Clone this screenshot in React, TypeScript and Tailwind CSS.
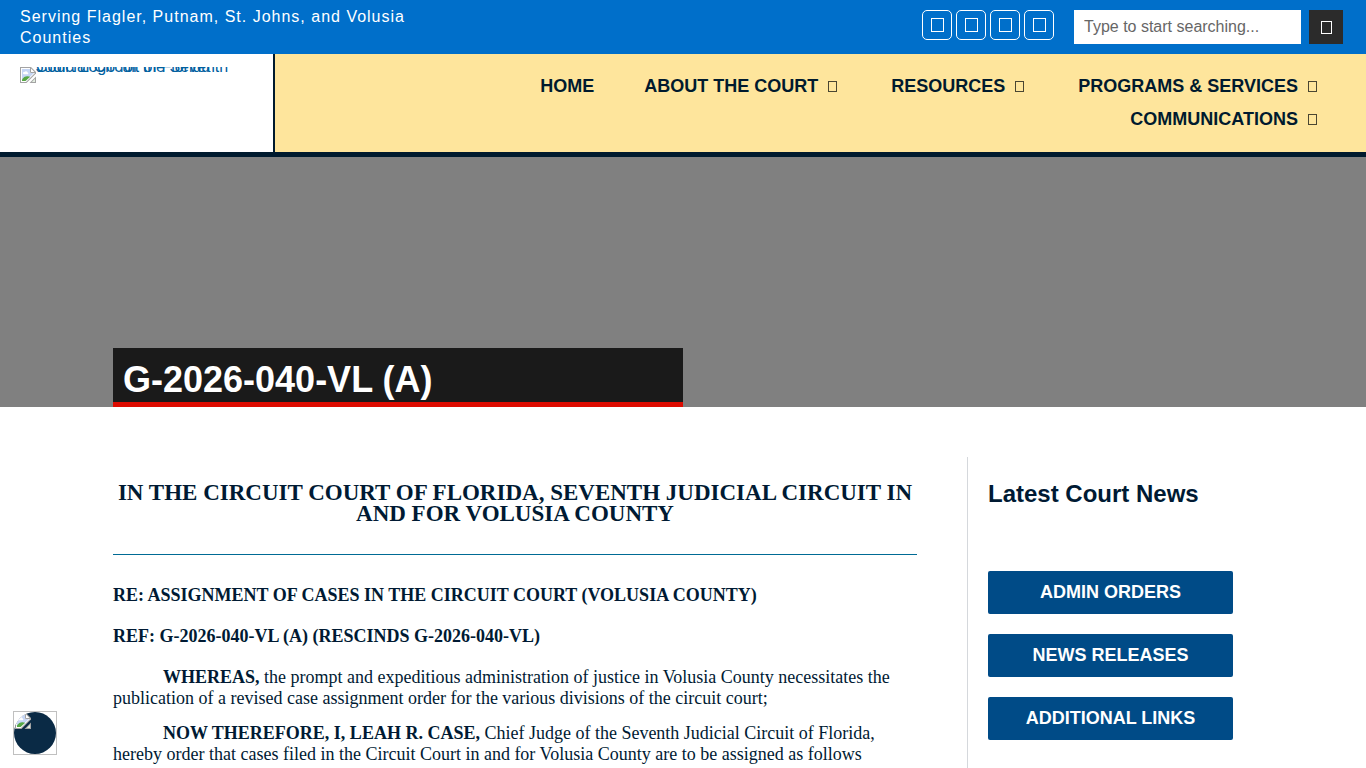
import React, { useState } from "react";
import clsx from "clsx";

const socialLinks = ["Facebook", "Twitter", "YouTube", "Instagram"];

const navItems = [
  { label: "HOME", href: "#home", hasMenu: false },
  { label: "ABOUT THE COURT", href: "#about", hasMenu: true },
  { label: "RESOURCES", href: "#resources", hasMenu: true },
  { label: "PROGRAMS & SERVICES", href: "#programs", hasMenu: true },
  { label: "COMMUNICATIONS", href: "#communications", hasMenu: true },
];

const sidebarLinks = [
  { label: "ADMIN ORDERS", href: "#admin-orders" },
  { label: "NEWS RELEASES", href: "#news-releases" },
  { label: "ADDITIONAL LINKS", href: "#additional-links" },
];

// empty glyph box, sized by the caller
function GlyphBox({ className }: { className: string }) {
  return <span aria-hidden="true" className={clsx("block border", className)} />;
}

// torn page with a little landscape, the tear itself stays see-through
function BrokenImage({ className }: { className?: string }) {
  return (
    <svg
      width="16"
      height="16"
      viewBox="0 0 16 16"
      aria-hidden="true"
      className={clsx("shrink-0", className)}
    >
      <path d="M0 0H11L16 5V6.5L6.5 16H0Z" fill="#a3a3a3" />
      <path d="M1 1H10.6L15 5.4V6L6 15H1Z" fill="#fff" />
      <path d="M2 2H10V6H14L5.5 14H2Z" fill="#c6d6f5" />
      <path d="M3 6.2a1.4 1.4 0 0 1 1.6-1.3 1.7 1.7 0 0 1 3 .6 1 1 0 0 1 .4 1.7H4a1 1 0 0 1-1-1Z" fill="#fff" />
      <path d="M2 14V12.6C3.4 10.4 5.3 9.2 7.4 9.3L10.2 9.7 5.5 14Z" fill="#57a844" />
      <path d="M10.5 0.5V5.5H15.5" fill="none" stroke="#a3a3a3" />
      <path d="M16 9.5V16H9.5Z" fill="#a3a3a3" />
      <path d="M15 11.8V15H11.8Z" fill="#e4efe2" />
    </svg>
  );
}

function TopBar() {
  const [query, setQuery] = useState("");

  return (
    <div className="flex items-start justify-between bg-[#006fca] text-white">
      <p className="w-1/3 px-5 py-1.5 leading-[21px] tracking-[1px]">
        Serving Flagler, Putnam, St. Johns, and Volusia Counties
      </p>
      <div className="flex gap-5 py-2.5 pr-[23px]">
        <div className="flex gap-1">
          {socialLinks.map((name) => (
            <a
              key={name}
              href={"#" + name.toLowerCase()}
              aria-label={name}
              className="flex size-[30px] items-center justify-center rounded-[5px] border border-white"
            >
              <GlyphBox className="h-3.5 w-[13px] border-white" />
            </a>
          ))}
        </div>
        <form className="flex gap-2" onSubmit={(e) => e.preventDefault()}>
          <input
            type="search"
            aria-label="Search"
            placeholder="Type to start searching..."
            value={query}
            onChange={(e) => setQuery(e.target.value)}
            className="h-[34px] w-[227px] bg-white px-2.5 text-black outline-none placeholder:text-[#666]"
          />
          <button
            type="submit"
            aria-label="Submit search"
            className="flex size-[34px] items-center justify-center bg-[#2b2b2b]"
          >
            <GlyphBox className="h-[13px] w-[11px] border-white" />
          </button>
        </form>
      </div>
    </div>
  );
}

function Header() {
  return (
    <header className="flex border-b-[5px] border-[#001a2e]">
      <div className="w-1/5 shrink-0 px-5 py-[13px]">
        <a href="#home" className="flex h-4 overflow-hidden text-[#00609f]">
          <BrokenImage />
          {/* collapsed line height stacks both lines of the logo label */}
          <span className="w-[200px] leading-[0px]">
            Court Logo for the Seventh
            <br />
            Judicial Circuit of Florida
          </span>
        </a>
      </div>
      <nav className="flex flex-1 flex-wrap justify-end border-l-2 border-[#001a2e] bg-[#fee59c] px-5 py-4">
        {navItems.map((item) => (
          <a
            key={item.label}
            href={item.href}
            className="flex h-[33px] items-center px-[25px] text-[18px] font-bold text-[#001a2e]"
          >
            {item.label}
            {item.hasMenu && <GlyphBox className="mr-1 ml-2.5 h-[11px] w-[9px] border-[#4a4632]" />}
          </a>
        ))}
      </nav>
    </header>
  );
}

export default function App() {
  return (
    <div className="flex min-h-screen flex-col bg-white font-['Liberation_Sans',Arial,sans-serif] text-base text-[#001a33]">
      <TopBar />
      <Header />

      <section className="flex h-[250px] items-end bg-[#808080]">
        <div className="mx-auto w-full max-w-[1140px]">
          <h1 className="w-1/2 border-b-[5px] border-[#dd0b00] bg-[#1a1a1a] px-2.5 pt-2.5 text-[36px] leading-[44px] font-bold text-white">
            G-2026-040-VL (A)
          </h1>
        </div>
      </section>

      <div className="mx-auto flex w-full max-w-[1140px] grow pt-[50px]">
        <main className="flex-1 pr-[50px] font-['Liberation_Serif','Times_New_Roman',serif] text-[18px] leading-[21px]">
          <h2 className="border-b border-[#006b95] pt-[25px] pb-[30px] text-center text-[23px] leading-[21px] font-bold">
            IN THE CIRCUIT COURT OF FLORIDA, SEVENTH JUDICIAL CIRCUIT IN AND FOR VOLUSIA COUNTY
          </h2>
          <p className="mt-[30px] mb-5 font-bold">
            RE: ASSIGNMENT OF CASES IN THE CIRCUIT COURT (VOLUSIA COUNTY)
          </p>
          <p className="mb-5 font-bold">REF: G-2026-040-VL (A) (RESCINDS G-2026-040-VL)</p>
          <p className="mb-3.5 indent-[50px]">
            <strong>WHEREAS,</strong> the prompt and expeditious administration of justice in Volusia
            County necessitates the publication of a revised case assignment order for the various
            divisions of the circuit court;
          </p>
          <p className="indent-[50px]">
            <strong>NOW THEREFORE, I, LEAH R. CASE,</strong> Chief Judge of the Seventh Judicial
            Circuit of Florida, hereby order that cases filed in the Circuit Court in and for Volusia
            County are to be assigned as follows
          </p>
        </main>

        <aside className="w-[286px] border-l border-[#d5d8dc] px-5 pt-[22px]">
          <h2 className="mb-[62px] text-[24px] leading-[30px] font-bold">Latest Court News</h2>
          <div className="flex flex-col gap-5">
            {sidebarLinks.map((link) => (
              <a
                key={link.label}
                href={link.href}
                className="flex h-[43px] items-center justify-center rounded-xs bg-[#004b87] text-[18px] font-bold text-white"
              >
                {link.label}
              </a>
            ))}
          </div>
        </aside>
      </div>

      <button
        type="button"
        aria-label="Accessibility options"
        className="fixed bottom-[13px] left-[13px] size-11 border border-[#c0c0c0]"
      >
        <span className="block size-full overflow-hidden rounded-full bg-[#0a2a45] pt-px pl-px">
          <BrokenImage />
        </span>
      </button>
    </div>
  );
}
